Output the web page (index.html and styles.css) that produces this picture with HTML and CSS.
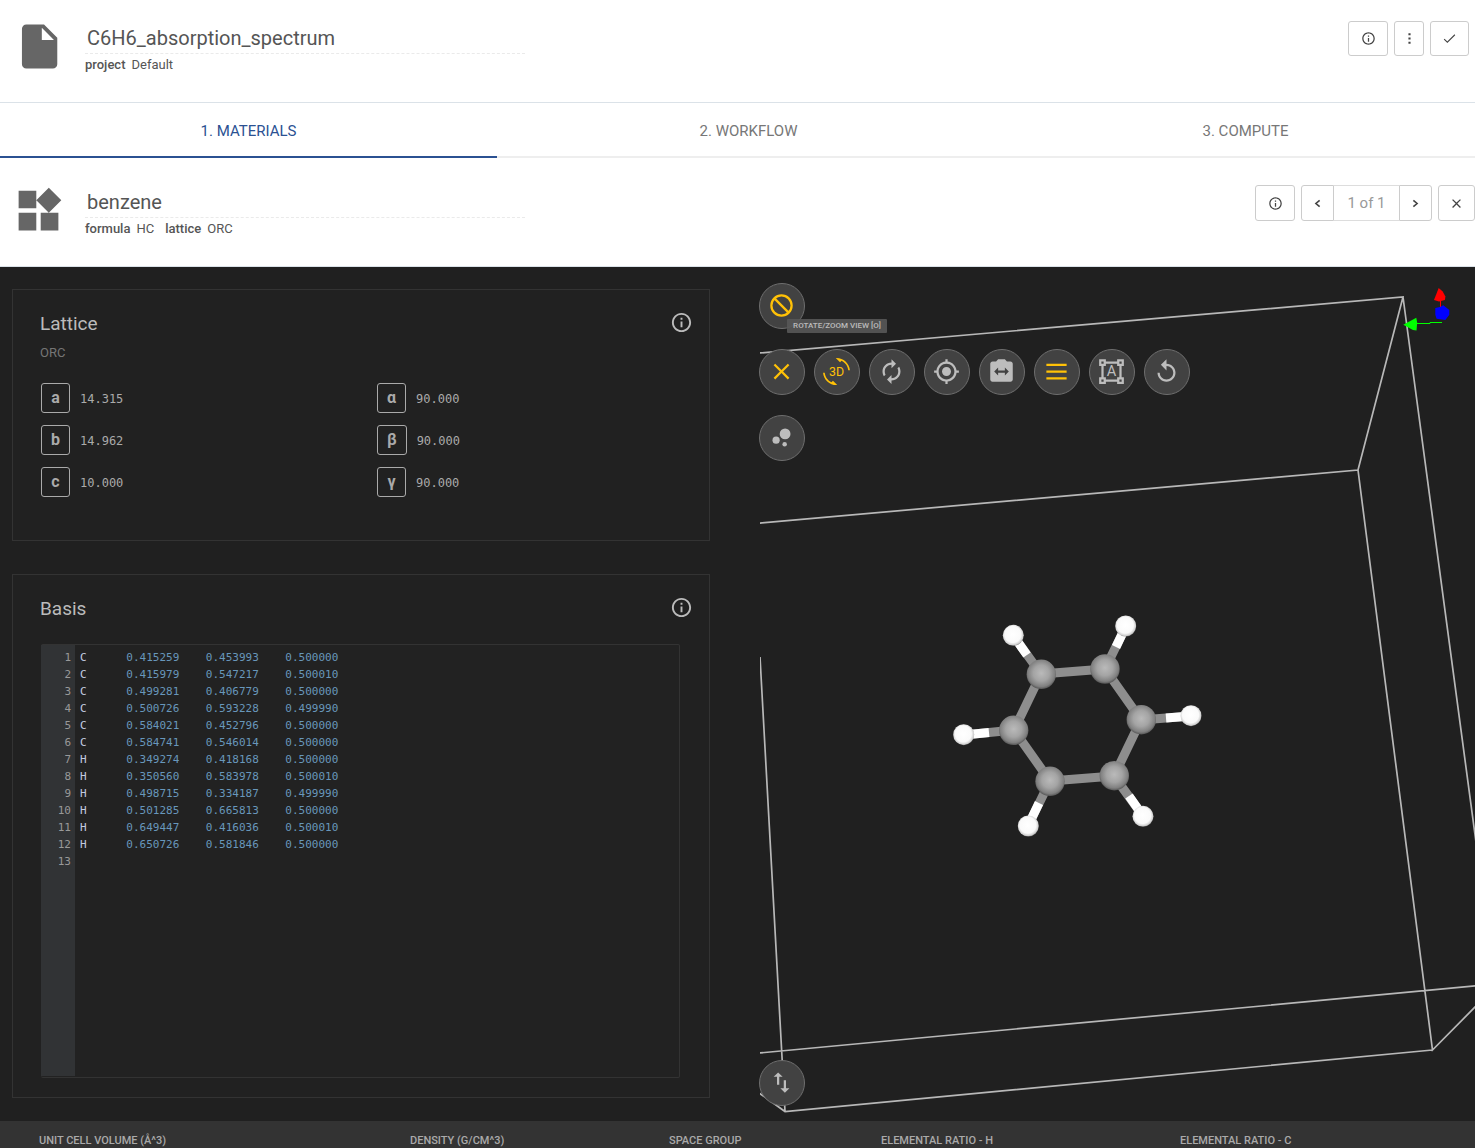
FILE: index.html
```html
<!DOCTYPE html>
<html lang="en">
<head>
<meta charset="utf-8">
<title>C6H6_absorption_spectrum</title>
<link rel="stylesheet" href="styles.css">
</head>
<body>
<svg class="defs" aria-hidden="true">
  <symbol id="i-info" viewBox="0 0 24 24"><path d="M11 7h2v2h-2zm0 4h2v6h-2zm1-9C6.48 2 2 6.48 2 12s4.48 10 10 10 10-4.48 10-10S17.52 2 12 2zm0 18c-4.41 0-8-3.59-8-8s3.59-8 8-8 8 3.59 8 8-3.59 8-8 8z"/></symbol>
  <symbol id="i-close" viewBox="0 0 24 24"><path d="M19 6.41L17.59 5 12 10.59 6.41 5 5 6.41 10.59 12 5 17.59 6.41 19 12 13.41 17.59 19 19 17.59 13.41 12z"/></symbol>
</svg>

<header class="bar">
  <svg class="bar-icon" viewBox="-0.5 0 24 24" aria-hidden="true"><path d="M6 2c-1.1 0-1.99.9-1.99 2L4 20c0 1.1.89 2 1.99 2H18c1.1 0 2-.9 2-2V8l-6-6H6zm7 7V3.5L18.5 9H13z"/></svg>
  <div class="bar-text">
    <input class="name" type="text" aria-label="Job name" value="C6H6_absorption_spectrum">
    <p class="meta"><b>project</b> <span>Default</span></p>
  </div>
  <div class="actions actions-job">
    <button class="btn" type="button" aria-label="Info"><svg class="ico" aria-hidden="true"><use href="#i-info"/></svg></button>
    <button class="btn btn-narrow" type="button" aria-label="More"><svg class="ico" viewBox="0 0 14 14" aria-hidden="true"><path d="M6 2h2v2H6zM6 6h2v2H6zM6 10h2v2H6z"/></svg></button>
    <button class="btn btn-end" type="button" aria-label="Save"><svg class="ico" viewBox="0 0 14 14" aria-hidden="true"><path class="line" d="M2 7.500l3 3 7-7"/></svg></button>
  </div>
</header>

<nav class="tabs">
  <a class="tab active" href="#materials">1. Materials</a>
  <a class="tab" href="#workflow">2. Workflow</a>
  <a class="tab" href="#compute">3. Compute</a>
</nav>

<header class="bar bar-material">
  <svg class="bar-icon" viewBox="0 0 24 24" aria-hidden="true"><path d="M13 13v8h8v-8h-8zM3 21h8v-8H3v8zM3 3v8h8V3H3zm13.66-1.31L11 7.34 16.66 13l5.66-5.66-5.66-5.65z"/></svg>
  <div class="bar-text">
    <input class="name" type="text" aria-label="Material name" value="benzene">
    <p class="meta"><b>formula</b> <span>HC</span> <b>lattice</b> <span>ORC</span></p>
  </div>
  <div class="actions">
    <button class="btn" type="button" aria-label="Info"><svg class="ico" aria-hidden="true"><use href="#i-info"/></svg></button>
    <div class="pager">
      <button class="btn" type="button" aria-label="Previous"><svg class="ico" viewBox="0 0 14 14" aria-hidden="true"><path class="line bold" d="M9 4L5.500 7 9 10"/></svg></button>
      <span class="count">1 of 1</span>
      <button class="btn" type="button" aria-label="Next"><svg class="ico" viewBox="0 0 14 14" aria-hidden="true"><path class="line bold" d="M5 4l3.500 3L5 10"/></svg></button>
    </div>
    <button class="btn btn-close" type="button" aria-label="Close"><svg class="ico" aria-hidden="true"><use href="#i-close"/></svg></button>
  </div>
</header>

<main class="work">
  <div class="panels">
    <section class="card">
      <div class="card-head">
        <h2>Lattice</h2>
        <button class="help" type="button" aria-label="About lattice"><svg aria-hidden="true"><use href="#i-info"/></svg></button>
      </div>
      <p class="kind">ORC</p>
      <dl class="params">
        <div><dt>a</dt><dd>14.315</dd></div>
        <div><dt>α</dt><dd>90.000</dd></div>
        <div><dt>b</dt><dd>14.962</dd></div>
        <div><dt>β</dt><dd>90.000</dd></div>
        <div><dt>c</dt><dd>10.000</dd></div>
        <div><dt>γ</dt><dd>90.000</dd></div>
      </dl>
    </section>

    <section class="card card-basis">
      <div class="card-head">
        <h2>Basis</h2>
        <button class="help" type="button" aria-label="About basis"><svg aria-hidden="true"><use href="#i-info"/></svg></button>
      </div>
      <div class="editor">
<pre class="gutter">1
2
3
4
5
6
7
8
9
10
11
12
13</pre>
<pre class="code"><b>C</b>      0.415259    0.453993    0.500000
<b>C</b>      0.415979    0.547217    0.500010
<b>C</b>      0.499281    0.406779    0.500000
<b>C</b>      0.500726    0.593228    0.499990
<b>C</b>      0.584021    0.452796    0.500000
<b>C</b>      0.584741    0.546014    0.500000
<b>H</b>      0.349274    0.418168    0.500000
<b>H</b>      0.350560    0.583978    0.500010
<b>H</b>      0.498715    0.334187    0.499990
<b>H</b>      0.501285    0.665813    0.500000
<b>H</b>      0.649447    0.416036    0.500010
<b>H</b>      0.650726    0.581846    0.500000</pre>
      </div>
    </section>
  </div>

  <section class="viewer" aria-label="Structure viewer">
    <svg class="scene" viewBox="760 267 715 854" preserveAspectRatio="xMinYMin slice" aria-hidden="true">
      <defs>
        <radialGradient id="carbon" cx="50%" cy="46%" r="54%"><stop offset="0" stop-color="#bababa"/><stop offset=".5" stop-color="#a4a4a4"/><stop offset=".85" stop-color="#808080"/><stop offset="1" stop-color="#565656"/></radialGradient>
        <radialGradient id="hydrogen" cx="48%" cy="46%" r="55%"><stop offset="0" stop-color="#fff"/><stop offset=".7" stop-color="#fafafa"/><stop offset=".9" stop-color="#cfcfcf"/><stop offset="1" stop-color="#808080"/></radialGradient>
      </defs>
      <g class="cell">
        <path d="M755 353.400L1403 297L1358 470L755 523.500M1403 297L1480 872M1358 470L1432.500 1050L1480 1002M1432.500 1050L785 1111.500L755 1090M755 1053.400L1480 985.500M760 657L785 1111.500"/>
      </g>
      <g class="bond-c">
        <path d="M1041 674L1105 669L1141 720L1114 776L1050 781L1014 730Z"/>
        <path d="M1041 674L1013 635M1105 669L1126 626M1141 720L1191 716M1114 776L1143 816M1050 781L1028 826M1014 730L964 735"/>
      </g>
      <path class="bond-h" d="M1027 655L1013 635M1116 647L1126 626M1166 718L1191 716M1129 796L1143 816M1039 803L1028 826M989 732.500L964 735"/>
      <g fill="url(#carbon)">
        <circle cx="1041.300" cy="674.300" r="14.700"/><circle cx="1105" cy="669" r="14.700"/><circle cx="1141.300" cy="719.700" r="14.700"/><circle cx="1114.300" cy="775.700" r="14.700"/><circle cx="1050" cy="781.300" r="14.700"/><circle cx="1013.700" cy="730.300" r="14.700"/>
      </g>
      <g fill="url(#hydrogen)">
        <circle cx="1013.300" cy="635.300" r="10.500"/><circle cx="1125.700" cy="626" r="10.500"/><circle cx="1191" cy="715.700" r="10.500"/><circle cx="1143" cy="816.300" r="10.500"/><circle cx="1028.300" cy="826" r="10.500"/><circle cx="963.700" cy="734.700" r="10.500"/>
      </g>
      <path stroke="red" d="M1440.500 298v9"/>
      <path fill="red" d="M1438.700 288l4 3.500 2.700 5-.5 3.500-5.900 1.500-5-1.500z"/>
      <path fill="none" stroke="#0f0" d="M1416 323.500h14v-1h12"/>
      <path fill="#0f0" d="M1403.300 324.700l13-7 .9 5-.7 7.800-3.500-.5z"/>
      <path fill="#00f" d="M1435.300 308l4.700-1 3.300-1.700 6 4.700v4.700l-4 5.300-8.700-1.300-1.300-4z"/>
    </svg>

    <div class="tools">
      <button class="tool on" type="button" aria-label="Stop interaction"><svg viewBox="0 0 24 24" aria-hidden="true"><path fill="none" stroke="currentColor" stroke-width="2" d="M3 12a9 9 0 1 0 18 0a9 9 0 1 0-18 0M5.700 5.700l12.600 12.600"/></svg><span class="tip">ROTATE/ZOOM VIEW [O]</span></button>
      <div class="tool-row">
        <button class="tool on" type="button" aria-label="Close menu"><svg aria-hidden="true"><use href="#i-close"/></svg></button>
        <button class="tool on" type="button" aria-label="Rotate view"><svg viewBox="0 0 24 24" aria-hidden="true"><path d="M7.520 21.480C4.250 19.940 1.910 16.760 1.550 13H.05C.56 19.160 5.710 24 12 24l.66-.03-3.810-3.810-1.330 1.320zM12 0l-.66.03 3.810 3.810 1.330-1.330c3.270 1.550 5.610 4.720 5.960 8.480h1.500C23.440 4.840 18.290 0 12 0z"/><text x="12" y="16" font-size="11">3D</text></svg></button>
        <button class="tool" type="button" aria-label="Auto rotate"><svg viewBox="0 0 24 24" aria-hidden="true"><path d="M12 6v3l4-4-4-4v3c-4.420 0-8 3.580-8 8 0 1.570.46 3.030 1.240 4.260L6.700 14.800c-.45-.83-.7-1.790-.7-2.800 0-3.310 2.690-6 6-6zm6.760 1.740L17.300 9.200c.44.84.7 1.790.7 2.800 0 3.310-2.690 6-6 6v-3l-4 4 4 4v-3c4.420 0 8-3.580 8-8 0-1.570-.46-3.030-1.240-4.260z"/></svg></button>
        <button class="tool" type="button" aria-label="Show axes"><svg viewBox="0 0 24 24" aria-hidden="true"><path d="M12 8c-2.210 0-4 1.790-4 4s1.790 4 4 4 4-1.790 4-4-1.790-4-4-4zm8.940 3c-.46-4.170-3.770-7.480-7.940-7.940V1h-2v2.060C6.830 3.520 3.520 6.830 3.060 11H1v2h2.060c.46 4.170 3.770 7.480 7.940 7.940V23h2v-2.060c4.170-.46 7.480-3.770 7.940-7.940H23v-2h-2.060zM12 19c-3.870 0-7-3.130-7-7s3.130-7 7-7 7 3.130 7 7-3.130 7-7 7z"/></svg></button>
        <button class="tool" type="button" aria-label="Switch camera"><svg viewBox="0 0 24 24" aria-hidden="true"><path d="M20 3h-3.170L15 1H9L7.170 3H4c-1.100 0-2 .9-2 2v14c0 1.100.9 2 2 2h16c1.100 0 2-.9 2-2V5c0-1.100-.9-2-2-2zm-5 12.500V13H9v2.500L5.500 12 9 8.500V11h6V8.500l3.500 3.500-3.500 3.500z"/></svg></button>
        <button class="tool on" type="button" aria-label="Bonds"><svg viewBox="0 0 24 24" aria-hidden="true"><path d="M3 19h18v-2H3v2zm0-6h18v-2H3v2zm0-8v2h18V5H3z"/></svg></button>
        <button class="tool" type="button" aria-label="Labels"><svg viewBox="0 0 24 24" aria-hidden="true"><path d="M23 7V1h-6v2H7V1H1v6h2v10H1v6h6v-2h10v2h6v-6h-2V7h2zM3 3h2v2H3V3zm2 18H3v-2h2v2zm12-2H7v-2H5V7h2V5h10v2h2v10h-2v2zm4 2h-2v-2h2v2zM19 5V3h2v2h-2z"/><text x="12" y="16" font-size="13">A</text></svg></button>
        <button class="tool" type="button" aria-label="Reset view"><svg viewBox="0 0 24 24" aria-hidden="true"><path d="M12 5V1L7 6l5 5V7c3.310 0 6 2.690 6 6s-2.690 6-6 6-6-2.690-6-6H4c0 4.420 3.580 8 8 8s8-3.580 8-8-3.580-8-8-8z"/></svg></button>
      </div>
      <button class="tool" type="button" aria-label="Atoms"><svg viewBox="0 0 24 24" aria-hidden="true"><circle cx="7.200" cy="14.400" r="3.200"/><circle cx="14.800" cy="18" r="2"/><circle cx="15.200" cy="8.800" r="4.800"/></svg></button>
      <button class="tool tool-last" type="button" aria-label="Import or export"><svg viewBox="0 0 24 24" aria-hidden="true"><path d="M9 3L5 6.990h3V14h2V6.990h3L9 3zm7 14.010V10h-2v7.010h-3L15 21l4-3.990h-3z"/></svg></button>
    </div>
  </section>
</main>

<footer>
  <ul class="stats">
    <li>Unit cell volume (Å^3)</li>
    <li>Density (g/cm^3)</li>
    <li>Space group</li>
    <li>Elemental ratio - H</li>
    <li>Elemental ratio - C</li>
  </ul>
</footer>
</body>
</html>
```
FILE: styles.css
```css
* { box-sizing: border-box; }

body {
  margin: 0;
  min-height: 100vh;
  display: flex;
  flex-direction: column;
  overflow-x: hidden;
  background: #fff;
  color: #555;
  font-family: Roboto, "Liberation Sans", sans-serif;
  font-size: 13px;
}

h2, p, pre, dl, dd, ul { margin: 0; }
button { font: inherit; color: inherit; padding: 0; cursor: pointer; }
svg { display: block; fill: currentColor; }
.defs { position: absolute; width: 0; height: 0; }

/* title bars */
.bar {
  display: flex;
  align-items: flex-start;
  min-height: 103px;
  padding: 20px 0 0 12px;
  border-bottom: 1px solid #dbe2e8;
}
.bar-material { min-height: 109px; padding-top: 26px; }
.bar-icon { width: 53px; height: 53px; color: #666; flex: none; }
.bar-text { width: 440px; margin-left: 20px; }
.name {
  display: block;
  width: 100%;
  height: 34px;
  padding: 2px 2px 0;
  border: 0;
  border-bottom: 1px dashed #eaeaea;
  background: none;
  color: #555;
  font: 20px/31px Roboto, "Liberation Sans", sans-serif;
}
.meta { display: flex; gap: 6px; line-height: 22px; font-size: 13px; }
.meta b { font-weight: 500; }
.meta span { margin-right: 5px; }

.actions { display: flex; gap: 6px; margin-left: auto; padding-top: 1px; }
.actions-job { padding-right: 6px; }
.btn {
  display: flex;
  align-items: center;
  justify-content: center;
  width: 40px;
  height: 36px;
  border: 1px solid #ccc;
  border-radius: 3px;
  background: #fff;
  color: #444;
}
.actions-job .btn { height: 35px; }
.actions .btn-narrow { width: 30px; }
.btn-end { width: 39px; }
.btn-close { width: 37px; }
.ico { width: 15px; height: 15px; }
.line { fill: none; stroke: currentColor; stroke-width: 1; }
.line.bold { stroke-width: 1.500; }
.pager { display: flex; }
.pager .btn { width: 33px; }
.pager .btn:first-child { border-radius: 3px 0 0 3px; }
.pager .btn:last-child { border-radius: 0 3px 3px 0; }
.count {
  width: 65px;
  border: solid #ddd;
  border-width: 1px 0;
  line-height: 34px;
  text-align: center;
  font-size: 15px;
  color: #999;
}

/* step tabs */
.tabs {
  display: grid;
  grid-template-columns: 497fr 503fr 491fr;
  margin-right: -16px;
}
.tab {
  height: 55px;
  border-bottom: 2px solid #eee;
  line-height: 56px;
  text-align: center;
  text-transform: uppercase;
  text-decoration: none;
  font-size: 15px;
  color: #777;
}
.tab.active { border-color: #2b5192; color: #2b5192; }

/* designer */
.work {
  flex: 1;
  display: grid;
  grid-template-columns: 698fr 715fr;
  gap: 50px;
  padding-left: 12px;
  background: #202020;
  color: #bbb;
}
.panels { display: flex; flex-direction: column; gap: 33px; padding: 22px 0 23px; }
.card { padding: 21px 16px 43px 27px; border: 1px solid #333; background: #212121; }
.card-basis { flex: 1; display: flex; flex-direction: column; padding-bottom: 19px; }
.card-head { display: flex; align-items: flex-start; justify-content: space-between; height: 26px; }
.card h2 { font-size: 19px; font-weight: 400; line-height: 26px; }
.help { border: 0; background: none; }
.help svg { width: 23px; height: 23px; }
.kind { margin-top: 6px; line-height: 20px; color: #757575; }
.params {
  display: grid;
  grid-template-columns: 336px 1fr;
  row-gap: 12px;
  margin: 20px 0 0 1px;
}
.params div { display: flex; align-items: center; gap: 10px; }
.params dt {
  min-width: 29px;
  height: 30px;
  padding: 0 9px;
  border: 1px solid #aaa;
  border-radius: 3px;
  line-height: 28px;
  text-align: center;
  font-size: 16px;
  font-weight: 700;
  color: #aaa;
}
.params dd { padding-top: 2px; font: 12px/18px "DejaVu Sans Mono", monospace; color: #aaa; }

.editor {
  flex: 1;
  display: flex;
  margin: 22px 13px 0 1px;
  padding-bottom: 1px;
  border: 1px solid #333;
  border-left: 0;
  border-radius: 2px;
  background: #222;
  font: 11px/17px "DejaVu Sans Mono", monospace;
}
.editor pre { font: inherit; padding: 4px 4px 0 5px; }
.editor .gutter { width: 34px; background: #313335; color: #999; text-align: right; }
.code { color: #6897bb; }
.code b { font-weight: 400; color: #c3cbe0; }

/* structure viewer */
.viewer { position: relative; min-height: 854px; }
.scene { position: absolute; width: 100%; height: 100%; }
.cell path { fill: none; stroke: #b8b8b8; stroke-width: 1.700; }
.bond-c { fill: none; stroke: #8e8e8e; stroke-width: 9; }
.bond-h { fill: none; stroke: #fff; stroke-width: 9; }

.tools {
  position: absolute;
  top: 16px;
  bottom: 15px;
  left: -1px;
  display: flex;
  flex-direction: column;
  align-items: flex-start;
  gap: 20px;
}
.tool-row { display: flex; gap: 9px; }
.tool {
  position: relative;
  display: flex;
  align-items: center;
  justify-content: center;
  width: 46px;
  height: 46px;
  padding: 0 1px 1px 0;
  border: 1px solid #6e6e6e;
  border-radius: 50%;
  background: #424242;
  color: #bdbdbd;
}
.tool.on { color: #ffc107; }
.tool svg { width: 27px; height: 27px; }
.tool text { font-family: Roboto, sans-serif; text-anchor: middle; }
.tool-last { margin-top: auto; }
.tip {
  position: absolute;
  top: 35px;
  left: 27px;
  width: 100px;
  height: 14px;
  border-radius: 1px;
  background: rgba(88, 88, 88, .9);
  color: #bbb;
  font-size: 8px;
  font-weight: 500;
  line-height: 14px;
  white-space: nowrap;
}

/* property strip */
.stats {
  display: grid;
  grid-template-columns: 371fr 259fr 212fr 299fr 295fr;
  padding: 12px 0 0 39px;
  list-style: none;
  background: #333;
  color: #aaa;
  font-size: 11px;
  font-weight: 500;
  line-height: 15px;
  text-transform: uppercase;
}
```
